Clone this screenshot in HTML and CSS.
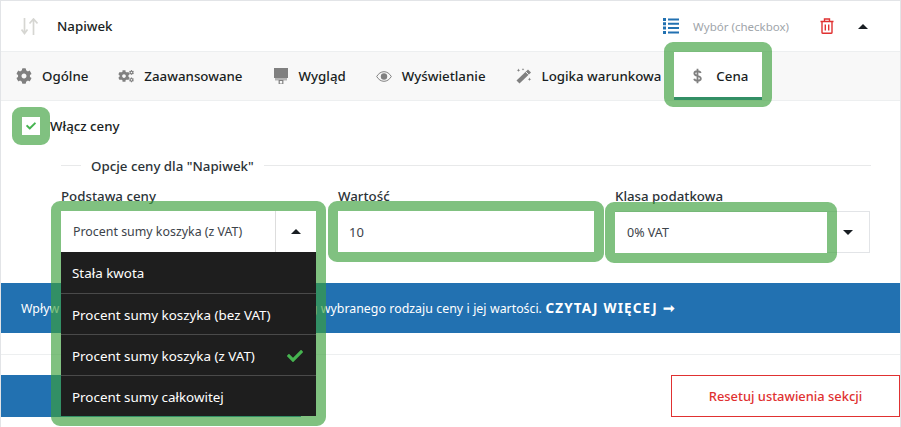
FILE: index.html
```html
<!DOCTYPE html>
<html lang="pl">
<head>
<meta charset="utf-8">
<title>Napiwek</title>
<link rel="stylesheet" href="styles.css">
</head>
<body>
<div class="panel">
  <header class="head">
    <svg class="sort-ico" viewBox="0 0 17 17"><path d="M3.500 0v15M.5 11.500l3 4 3-4M12.500 17V2M8.500 5.500l4-4.500 4 4.500" fill="none" stroke="#d6d6d2" stroke-width="1.700"/></svg>
    <span class="head-title">Napiwek</span>
    <svg class="list-ico" viewBox="0 0 16 16"><path fill="#2271b1" d="M0 0h3v3H0zM0 4.300h3v3H0zM0 8.600h3v3H0zM0 13h3v3H0zM5 .5h11v2H5zM5 4.800h11v2H5zM5 9.100h11v2H5zM5 13.500h11v2H5z"/></svg>
    <span class="head-type">Wybór (checkbox)</span>
    <svg class="trash-ico" viewBox="0 0 14 16"><path fill="none" stroke="#e03131" stroke-width="1.400" d="M2 4v10.500c0 .5.500.8 1 .8h8c.5 0 1-.3 1-.8V4M.5 3.500h13M4.500 3.300V1h5v2.300M5.300 6.500v6M8.700 6.500v6"/></svg>
    <span class="caret up head-caret"></span>
  </header>
  <nav class="tabs">
    <a class="tab"><svg class="tab-ico" viewBox="0 0 512 512"><path id="cog" d="M487.400 315.700l-42.600-24.600c4.300-23.200 4.300-47 0-70.200l42.600-24.600c4.900-2.800 7.100-8.600 5.500-14-11.100-35.600-30-67.800-54.700-94.600-3.800-4.100-10-5.100-14.800-2.300L380.800 110c-17.900-15.400-38.500-27.300-60.800-35.100V25.800c0-5.600-3.900-10.500-9.400-11.700-36.700-8.200-74.300-7.800-109.200 0-5.500 1.200-9.400 6.100-9.400 11.700V75c-22.200 7.900-42.800 19.800-60.800 35.100L88.700 85.500c-4.900-2.800-11-1.900-14.800 2.300-24.700 26.700-43.600 58.900-54.700 94.600-1.700 5.400.6 11.200 5.500 14L67.300 221c-4.300 23.200-4.300 47 0 70.200l-42.600 24.600c-4.900 2.800-7.100 8.600-5.500 14 11.100 35.600 30 67.800 54.700 94.600 3.800 4.100 10 5.100 14.800 2.300l42.600-24.600c17.900 15.400 38.500 27.300 60.800 35.100v49.200c0 5.600 3.900 10.500 9.400 11.700 36.700 8.200 74.300 7.800 109.200 0 5.500-1.200 9.400-6.100 9.400-11.700v-49.200c22.200-7.900 42.800-19.800 60.800-35.100l42.600 24.600c4.900 2.800 11 1.900 14.800-2.300 24.700-26.700 43.600-58.900 54.700-94.600 1.500-5.500-.7-11.300-5.600-14.100zM256 336c-44.100 0-80-35.900-80-80s35.900-80 80-80 80 35.900 80 80-35.900 80-80 80z"/></svg>Ogólne</a>
    <a class="tab"><svg class="tab-ico" viewBox="0 0 512 512"><use href="#cog" transform="translate(0 64) scale(.75)"/><use href="#cog" transform="translate(352 64) scale(.31)"/><use href="#cog" transform="translate(352 300) scale(.31)"/></svg>Zaawansowane</a>
    <a class="tab"><svg class="tab-ico" viewBox="0 0 16 16"><path d="M1 0h14v10H1z"/><path fill="#b4b4b4" d="M2 10h12v2.500H2z"/><path fill="none" stroke="#808080" stroke-width="1.200" d="M6.200 12.500h3.600V16H6.200z"/></svg>Wygląd</a>
    <a class="tab"><svg class="tab-ico eye" viewBox="0 0 16 11"><path fill="none" stroke="#808080" stroke-width="1" d="M.7 5.500C2.500 2.500 5 .7 8 .7s5.500 1.800 7.300 4.800c-1.800 3-4.300 4.800-7.300 4.800S2.500 8.500.7 5.500z"/><circle cx="8" cy="5.500" r="3.200"/></svg>Wyświetlanie</a>
    <a class="tab"><svg class="tab-ico" viewBox="0 0 16 16"><path d="M12 1.500 15 4.500 3.500 15.500.5 12.500z"/><path stroke="#f8f8f8" d="M9.600 3.700l3 3"/><path d="M2.500.5l.5 1.300 1.300.5L3 2.800l-.5 1.300L2 2.800.7 2.300 2 1.800zM7 0l.4.900.9.4-.9.4L7 2.600l-.4-.9-.9-.4.900-.4zM13.500 9.500l.5 1.300 1.300.5-1.300.5-.5 1.300-.5-1.300-1.300-.5 1.300-.5z"/></svg>Logika warunkowa</a>
    <a class="tab tab-active ring"><svg class="tab-ico dollar" viewBox="0 0 10 16"><path fill="none" stroke="#808080" stroke-width="2" d="M8.500 4.700C8.200 3.300 6.800 2.700 5 2.700S1.500 3.500 1.500 5.200C1.500 8.500 8.700 7.300 8.700 10.800c0 1.700-1.700 2.500-3.700 2.500S1.700 12.500 1.300 11M5 0v16"/></svg>Cena</a>
  </nav>
  <label class="enable">
    <span class="check ring"><svg class="check-ico" viewBox="0 0 512 512"><path d="M173.898 439.404l-166.400-166.400c-9.997-9.997-9.997-26.206 0-36.204l36.203-36.204c9.997-9.998 26.207-9.998 36.204 0L192 312.690 432.095 72.596c9.997-9.997 26.207-9.997 36.204 0l36.203 36.204c9.997 9.997 9.997 26.206 0 36.204l-294.400 294.401c-9.998 9.997-26.207 9.997-36.204-.001z"/></svg></span>
    <span>Włącz ceny</span>
  </label>
  <div class="legend"><span class="legend-text">Opcje ceny dla "Napiwek"</span></div>
  <div class="fields">
    <div class="field">
      <div class="field-label">Podstawa ceny</div>
      <div class="select-wrap ring">
        <div class="select"><span class="select-value">Procent sumy koszyka (z VAT)</span><span class="select-btn"><span class="caret up"></span></span></div>
        <ul class="menu">
          <li class="menu-item">Stała kwota</li>
          <li class="menu-item">Procent sumy koszyka (bez VAT)</li>
          <li class="menu-item">Procent sumy koszyka (z VAT)<svg class="menu-check" viewBox="0 0 512 512"><path d="M173.898 439.404l-166.400-166.400c-9.997-9.997-9.997-26.206 0-36.204l36.203-36.204c9.997-9.998 26.207-9.998 36.204 0L192 312.690 432.095 72.596c9.997-9.997 26.207-9.997 36.204 0l36.203 36.204c9.997 9.997 9.997 26.206 0 36.204l-294.400 294.401c-9.998 9.997-26.207 9.997-36.204-.001z"/></svg></li>
          <li class="menu-item">Procent sumy całkowitej</li>
        </ul>
      </div>
    </div>
    <div class="field">
      <div class="field-label">Wartość</div>
      <div class="input ring">10</div>
    </div>
    <div class="field field-tax">
      <div class="field-label">Klasa podatkowa</div>
      <div class="tax">
        <div class="tax-value ring">0% VAT</div>
        <div class="tax-btn"><span class="caret down"></span></div>
      </div>
    </div>
  </div>
  <div class="notice">Wpływ na cenę końcową ma to obliczenie – według wybranego rodzaju ceny i jej wartości. <strong>CZYTAJ WIĘCEJ ➞</strong></div>
  <hr class="sep">
  <div class="actions">
    <a class="btn-save"></a>
    <a class="btn-reset">Resetuj ustawienia sekcji</a>
  </div>
</div>
</body>
</html>
```
FILE: styles.css
```css
* { box-sizing: border-box; }
html, body { margin: 0; height: 427px; overflow: hidden; background: #fff; }
body { font-family: "Noto Sans", "Open Sans", sans-serif; font-size: 14px; color: #23282d; }
.panel { height: 427px; border-top: 1px solid #e2e4e7; border-left: 1px solid #e2e4e7; border-right: 1px solid #e2e4e7; position: relative; }

.head { height: 50px; display: flex; align-items: center; padding-left: 20px; }
.sort-ico { width: 17px; height: 17px; margin-right: 19px; }
.head-title { font-size: 13.300px; font-weight: 500; color: #191e23; flex: 1; }
.list-ico { width: 16px; height: 16px; margin-right: 14px; }
.head-type { font-size: 11.500px; color: #a0a5aa; margin-right: 31px; }
.trash-ico { width: 14px; height: 16px; margin-right: 24px; }
.head-caret { margin-right: 32px; }

.caret { display: inline-block; width: 0; height: 0; border-left: 5.500px solid transparent; border-right: 5.500px solid transparent; }
.caret.up { border-bottom: 5.500px solid #191e23; }
.caret.down { border-top: 5.500px solid #191e23; }

.tabs { height: 50px; display: flex; background: #f8f8f8; border-top: 1px solid #edeff0; border-bottom: 1px solid #edeff0; padding-left: 15px; }
.tab { display: flex; align-items: center; font-size: 13.300px; font-weight: 500; color: #191e23; margin-right: 30px; }
.tab-ico { width: 16px; height: 16px; margin-right: 10px; fill: #808080; }
.eye { height: 11px; }
.dollar { width: 9px; margin-right: 14px; }
.tab-active { width: 88px; height: 48px; margin: 0 0 0 -17px; background: #fff; border-bottom: 3px solid #2271b1; padding: 3px 0 0 19px; position: relative; }

.ring { position: relative; }
.ring::after { content: ""; position: absolute; inset: -10px; border: 10px solid rgba(60, 160, 60, 0.65); border-radius: 9px; pointer-events: none; z-index: 5; }

.enable { display: flex; align-items: center; height: 18px; margin: 16px 0 0 21px; font-size: 13.300px; font-weight: 500; color: #191e23; }
.check { width: 18px; height: 18px; margin-right: 10px; background: #fff; display: flex; align-items: center; justify-content: center; }
.check-ico { width: 10px; height: 10px; fill: #46b450; }

.legend { margin: 20px 29px 0 60px; height: 1px; background: #e8e9ea; display: flex; align-items: center; padding-left: 20px; position: relative; top: 10px; }
.legend-text { background: #fff; padding: 0 10px; font-size: 13.300px; font-weight: 500; color: #2c3338; line-height: 20px; }

.fields { display: flex; margin: 32px 30px 0 60px; align-items: flex-start; }
.field { width: 257px; margin-right: 20px; }
.field-label { font-size: 13.300px; font-weight: 500; color: #2c3338; height: 20px; line-height: 20px; margin-top: -2px; margin-bottom: 5px; }
.field-tax { flex: 1; margin-right: 0; }

.select-wrap { position: relative; z-index: 6; width: 255px; }
.select { height: 41px; background: #fff; display: flex; align-items: center; font-size: 12.400px; color: #3c434a; }
.select-value { flex: 1; padding-left: 12px; }
.select-btn { width: 41px; height: 41px; border-left: 1px solid #ddd; display: flex; align-items: center; justify-content: center; }
.menu { list-style: none; margin: 0; padding: 0; background: #1e1e1e; color: #fff; }
.menu-item { height: 41px; display: flex; align-items: center; justify-content: space-between; padding: 1px 13px 0 11px; font-size: 13.400px; border-top: 1px solid #4a4a4a; }
.menu-item:first-child { border-top: 0; padding-top: 0; }
.menu-check { width: 16px; height: 16px; fill: #46b450; }

.input { height: 41px; width: 256px; background: #fff; display: flex; align-items: center; padding-left: 11px; font-size: 13px; color: #3c434a; }
.tax { display: flex; height: 42px; border: 1px solid #e2e4e7; border-left: 0; }
.tax-value { width: 212px; height: 41px; background: #fff; display: flex; align-items: center; padding-left: 12px; font-size: 12.500px; color: #3c434a; }
.tax-btn { flex: 1; display: flex; align-items: center; justify-content: center; }

.notice { position: absolute; left: 0; right: 0; top: 282px; height: 50px; line-height: 50px; background: #2271b1; color: #fff; font-size: 12.350px; word-spacing: .25px; padding-left: 20px; white-space: nowrap; }
.notice strong { font-size: 13.500px; font-weight: 700; letter-spacing: 1.150px; }
.sep { position: absolute; left: 0; right: 0; top: 353px; margin: 0; border: 0; height: 1px; background: #edeff0; }
.actions { position: absolute; left: 0; right: 0; top: 374px; display: flex; justify-content: space-between; }
.btn-save { width: 300px; height: 42px; background: #2271b1; }
.btn-reset { width: 229px; height: 42px; border: 1px solid #e03131; color: #e03131; font-size: 12.900px; font-weight: 500; display: flex; align-items: center; justify-content: center; }
```
